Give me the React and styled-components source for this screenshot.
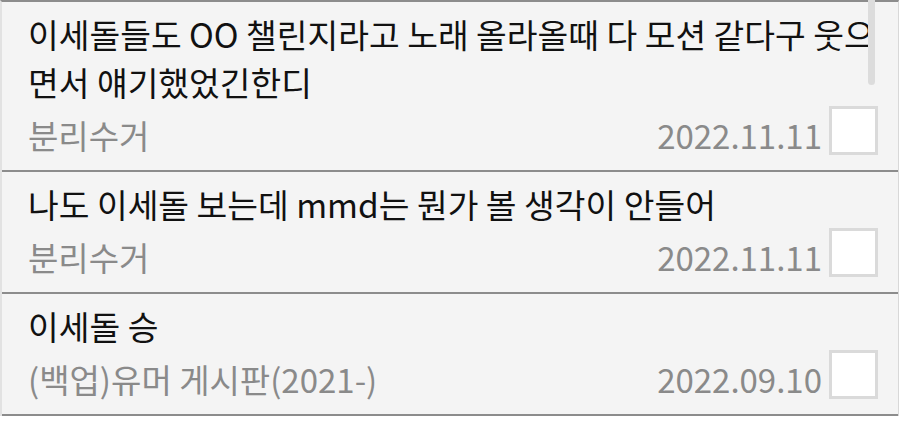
import React from "react";
import styled, { createGlobalStyle } from "styled-components";

const GlobalStyle = createGlobalStyle`
  html, body {
    margin: 0;
    padding: 0;
    background: #ffffff;
  }
  body {
    font-family: "Noto Sans CJK KR", "Noto Sans", sans-serif;
  }
`;

// list frame with the thin light side borders
const ListFrame = styled.ul`
  position: relative;
  list-style: none;
  margin: 0;
  padding: 0;
  width: 899px;
  box-sizing: border-box;
  background: #f4f4f4;
  border-left: 2px solid #e2e2e2;
  border-right: 1px solid #d8d8d8;
  border-top: 2px solid #8c8c8c;
`;

const Scrollbar = styled.div`
  position: absolute;
  top: -2px;
  left: 866px;
  width: 7px;
  height: 85px;
  border-radius: 0 0 4px 4px;
  background: #dcdcdc;
`;

const Row = styled.li`
  padding: 8px 20px 15px 26px;
  border-bottom: 2px solid #8c8c8c;
`;

const Title = styled.div`
  font-size: 33.4px;
  line-height: 48px;
  color: #111111;
`;

const Meta = styled.div`
  display: flex;
  align-items: flex-end;
  height: 49px;
`;

const Board = styled.span`
  flex: 1;
  font-size: 33px;
  line-height: 40px;
  color: #8a8a8a;
  white-space: nowrap;
`;

const DateText = styled.span`
  font-size: 33px;
  line-height: 40px;
  color: #8a8a8a;
  margin-right: 7px;
`;

const Check = styled.input.attrs({ type: "checkbox" })`
  appearance: none;
  margin: 0;
  width: 49px;
  height: 49px;
  box-sizing: border-box;
  border: 3px solid #dadada;
  background: #ffffff;
  flex-shrink: 0;
`;

const posts = [
  {
    title: "이세돌들도 OO 챌린지라고 노래 올라올때 다 모션 같다구 웃으면서 얘기했었긴한디",
    board: "분리수거",
    date: "2022.11.11",
  },
  {
    title: "나도 이세돌 보는데 mmd는 뭔가 볼 생각이 안들어",
    board: "분리수거",
    date: "2022.11.11",
  },
  {
    title: "이세돌 승",
    board: "(백업)유머 게시판(2021-)",
    date: "2022.09.10",
  },
];

export default function App() {
  return (
    <>
      <GlobalStyle />
      <ListFrame>
        {posts.map((p, i) => (
          <Row key={i}>
            <Title>{p.title}</Title>
            <Meta>
              <Board>{p.board}</Board>
              <DateText>{p.date}</DateText>
              <Check />
            </Meta>
          </Row>
        ))}
        <Scrollbar />
      </ListFrame>
    </>
  );
}
